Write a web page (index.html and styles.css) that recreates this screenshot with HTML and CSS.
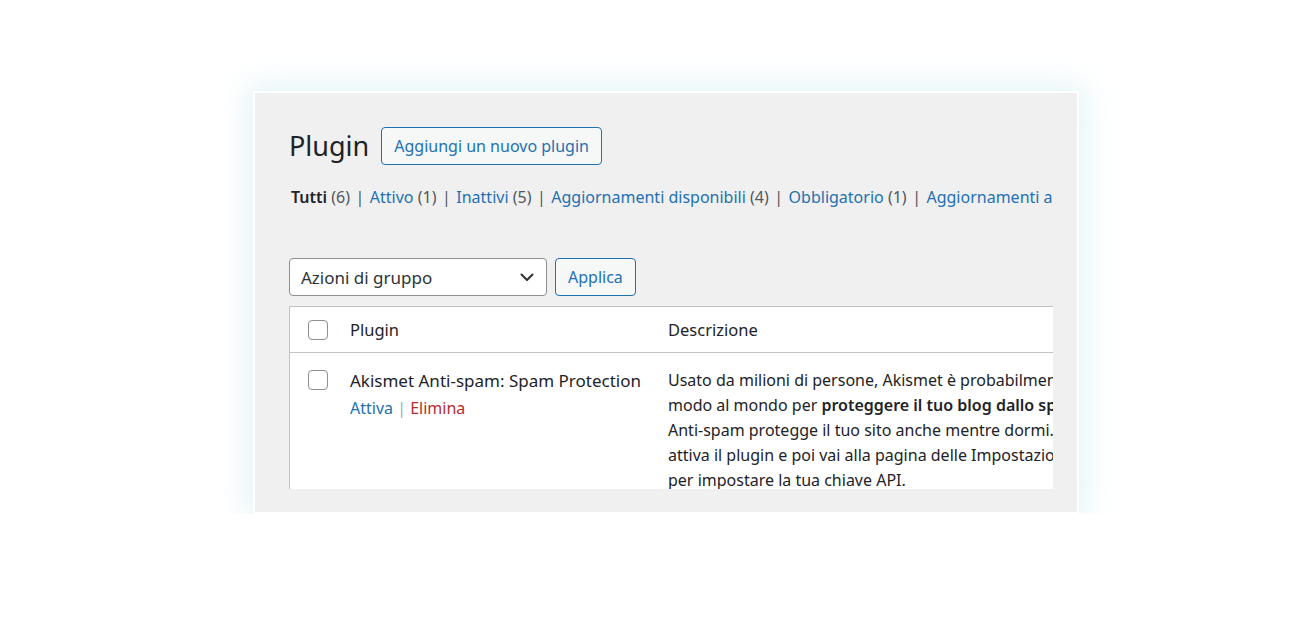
FILE: index.html
```html
<!DOCTYPE html>
<html lang="it">
<head>
    <meta charset="UTF-8">
    <meta name="viewport" content="width=device-width, initial-scale=1.0">
    <title>Plugin</title>
    <link rel="stylesheet" href="styles.css">
</head>
<body>
    <div class="card">
        <div class="viewport">
            <div class="page-head">
                <h1>Plugin</h1>
                <a class="btn-outline" href="#">Aggiungi un nuovo plugin</a>
            </div>

            <ul class="subsubsub">
                <li><b>Tutti</b> <span class="count">(6)</span></li>
                <li class="sep">|</li>
                <li><a href="#">Attivo</a> <span class="count">(1)</span></li>
                <li class="sep">|</li>
                <li><a href="#">Inattivi</a> <span class="count">(5)</span></li>
                <li class="sep">|</li>
                <li><a href="#">Aggiornamenti disponibili</a> <span class="count">(4)</span></li>
                <li class="sep">|</li>
                <li><a href="#">Obbligatorio</a> <span class="count">(1)</span></li>
                <li class="sep">|</li>
                <li><a href="#">Aggiornamenti automatici</a></li>
            </ul>

            <div class="bulk">
                <div class="select">
                    <span>Azioni di gruppo</span>
                    <svg width="14" height="9" viewBox="0 0 14 9"><path d="M1.5 1.5 L7 7 L12.5 1.5" fill="none" stroke="#2c3338" stroke-width="2" stroke-linecap="round" stroke-linejoin="round"/></svg>
                </div>
                <button class="btn-outline small">Applica</button>
            </div>

            <div class="table">
                <div class="row head">
                    <div class="cell check"><span class="box"></span></div>
                    <div class="cell name">Plugin</div>
                    <div class="cell desc">Descrizione</div>
                </div>
                <div class="row">
                    <div class="cell check"><span class="box"></span></div>
                    <div class="cell name">
                        <div class="title">Akismet Anti-spam: Spam Protection</div>
                        <div class="actions"><a href="#">Attiva</a> <span class="pipe">|</span> <a class="delete" href="#">Elimina</a></div>
                    </div>
                    <div class="cell desc">
                        <p>Usato da milioni di persone, Akismet è probabilmente<br>modo al mondo per <b>proteggere il tuo blog dallo spam</b>.<br>Anti-spam protegge il tuo sito anche mentre dormi.<br>attiva il plugin e poi vai alla pagina delle Impostazioni<br>per impostare la tua chiave API.</p>
                    </div>
                </div>
            </div>
        </div>
    </div>
</body>
</html>
```

FILE: styles.css
```css
body {
    margin: 0;
    background: #ffffff;
    font-family: "Noto Sans", "Open Sans", sans-serif;
    color: #1d2327;
}

a {
    color: #2271b1;
    text-decoration: none;
}

.card {
    margin: 91px 0 0 253px;
    width: 826px;
    height: 423px;
    border: 2px solid #ffffff;
    background: #f0f0f1;
    box-shadow: 0 0 30px 4px rgba(175, 222, 236, 0.4);
    padding: 0 0 0 34px;
    box-sizing: border-box;
}

.viewport {
    width: 764px;
    height: 396px;
    overflow: hidden;
    padding-top: 34px;
    box-sizing: border-box;
}

.page-head {
    display: flex;
    align-items: center;
    gap: 12px;
}

h1 {
    margin: 0;
    font-size: 27px;
    font-weight: 400;
    line-height: 38px;
}

.btn-outline {
    display: inline-flex;
    align-items: center;
    height: 38px;
    padding: 0 12px;
    border: 1px solid #2271b1;
    border-radius: 4px;
    background: #f6f7f7;
    color: #2271b1;
    font-family: inherit;
    font-size: 16px;
    box-sizing: border-box;
}

.subsubsub {
    display: flex;
    white-space: nowrap;
    list-style: none;
    margin: 21px 0 0 2px;
    padding: 0;
    font-size: 16px;
    line-height: 22px;
    color: #50575e;
}

.subsubsub b {
    color: #1d2327;
    font-weight: 600;
}

.subsubsub .sep {
    padding: 0 5.5px;
    color: #50575e;
}

.bulk {
    display: flex;
    gap: 8px;
    margin-top: 50px;
}

.select {
    width: 258px;
    height: 38px;
    display: flex;
    align-items: center;
    justify-content: space-between;
    padding: 0 12px 0 11px;
    border: 1px solid #8c8f94;
    border-radius: 4px;
    background: #ffffff;
    font-size: 17px;
    color: #2c3338;
    box-sizing: border-box;
}

.btn-outline.small {
    padding: 0 12px;
    font-size: 16px;
}

.table {
    width: 900px;
    margin-top: 10px;
    background: #ffffff;
    border: 1px solid #c3c4c7;
}

.row {
    display: flex;
}

.row.head {
    border-bottom: 1px solid #c3c4c7;
    height: 45px;
    align-items: center;
    font-size: 16.5px;
}

.cell.check {
    width: 48px;
    padding-left: 18px;
    box-sizing: border-box;
    flex-shrink: 0;
}

.cell.name {
    width: 318px;
    padding: 0 12px;
    box-sizing: border-box;
    flex-shrink: 0;
}

.cell.desc {
    flex: 1;
    padding: 0 12px;
}

.box {
    display: block;
    width: 20px;
    height: 20px;
    border: 1px solid #8c8f94;
    border-radius: 4px;
    background: #ffffff;
    box-sizing: border-box;
}

.row:not(.head) {
    padding-top: 15px;
}

.row:not(.head) .cell.check {
    padding-top: 2px;
}

.title {
    font-size: 17px;
    line-height: 26px;
}

.actions {
    font-size: 16px;
    line-height: 28px;
}

.actions .pipe {
    color: #a7aaad;
}

.actions .delete {
    color: #b32d2e;
}

.desc p {
    margin: 0;
    font-size: 16px;
    line-height: 25px;
    white-space: nowrap;
}

.desc b {
    font-weight: 600;
}
```
